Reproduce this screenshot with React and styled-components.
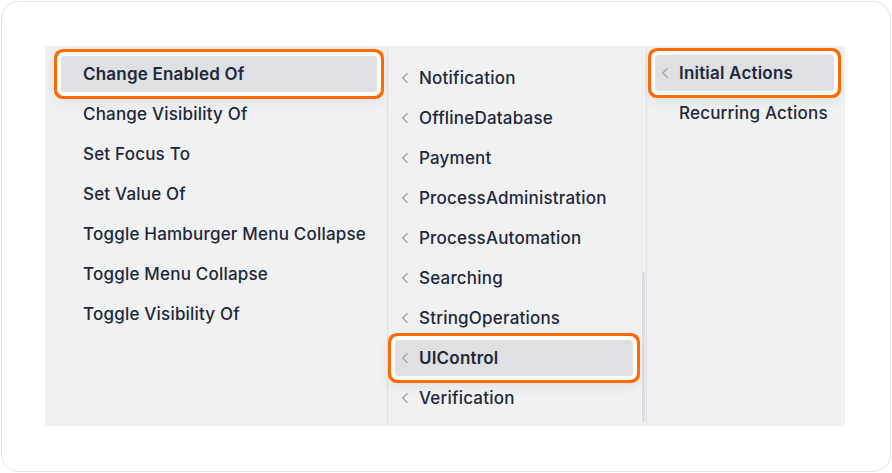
import styled, { createGlobalStyle, css } from "styled-components";
import { ChevronLeft } from "lucide-react";

const GlobalStyle = createGlobalStyle`
  html, body {
    margin: 0;
    background: #ffffff;
    font-family: Inter, "Noto Sans", sans-serif;
  }
  * { box-sizing: border-box; }
`;

const actions = [
  "Change Enabled Of",
  "Change Visibility Of",
  "Set Focus To",
  "Set Value Of",
  "Toggle Hamburger Menu Collapse",
  "Toggle Menu Collapse",
  "Toggle Visibility Of",
];

const categories = [
  "Notification",
  "OfflineDatabase",
  "Payment",
  "ProcessAdministration",
  "ProcessAutomation",
  "Searching",
  "StringOperations",
  "UIControl",
  "Verification",
];

const triggers = ["Initial Actions", "Recurring Actions"];

const App = () => {
  return (
    <>
      <GlobalStyle />
      <Card>
        <Panel>
          <Column $width={343} $pl={16} $pr={10} $pt={10}>
            {actions.map((a, i) => (
              <Item key={a} $active={i === 0} $pl={22}>
                {a}
              </Item>
            ))}
          </Column>
          <Column $width={259} $pl={7} $pr={13} $pt={14} $scroll>
            {categories.map((c) => (
              <Item key={c} $active={c === "UIControl"} $pl={1}>
                <Chevron size={18} strokeWidth={1.5} />
                {c}
              </Item>
            ))}
          </Column>
          <Column $width={198} $pl={8} $pr={11} $pt={9} $last>
            {triggers.map((t, i) => (
              <Item key={t} $active={i === 0} $pl={1}>
                {i === 0 ? <Chevron size={18} strokeWidth={1.5} /> : <Spacer />}
                {t}
              </Item>
            ))}
          </Column>
        </Panel>
      </Card>
    </>
  );
};

export default App;

const Card = styled.div`
  width: 890px;
  height: 471px;
  margin: 1px;
  border: 1.5px solid #e2e4e8;
  border-radius: 18px;
  padding: 44px 43px;
  background: #ffffff;
`;

const Panel = styled.div`
  display: flex;
  width: 800px;
  height: 380px;
  background: #f0f1f3;
`;

const Column = styled.div`
  position: relative;
  width: ${(p) => p.$width}px;
  flex: none;
  display: flex;
  flex-direction: column;
  gap: 4px;
  padding: ${(p) => p.$pt}px ${(p) => p.$pr}px 0 ${(p) => p.$pl}px;
  border-right: ${(p) => (p.$last ? "none" : "1px solid #e1e2e6")};
  ${(p) =>
    p.$scroll &&
    css`
      &::after {
        content: "";
        position: absolute;
        right: 1px;
        top: 226px;
        width: 3px;
        height: 150px;
        border-radius: 2px;
        background: #dcdde1;
      }
    `}
`;

const Item = styled.div`
  display: flex;
  align-items: center;
  height: 36px;
  flex: none;
  padding-left: ${(p) => p.$pl}px;
  border-radius: 4px;
  font-size: 17px;
  letter-spacing: 0.2px;
  font-weight: ${(p) => (p.$active ? 600 : 500)};
  color: #1e2839;
  white-space: nowrap;
  ${(p) =>
    p.$active &&
    css`
      background: #dfe0e4;
      box-shadow: 0 0 0 4px #ffffff, 0 0 0 7px #ff6b00,
        0 4px 14px 6px rgba(30, 40, 60, 0.08);
      border-radius: 3px;
    `}
`;

const Chevron = styled(ChevronLeft)`
  color: #9a9ea6;
  margin-right: 5px;
  flex: none;
`;

const Spacer = styled.span`
  width: 23px;
  flex: none;
`;
